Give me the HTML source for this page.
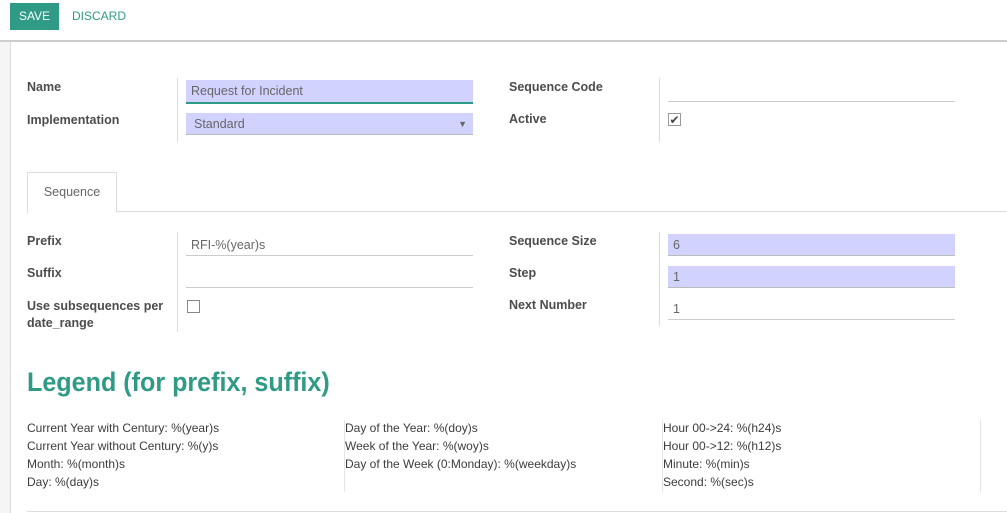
<!DOCTYPE html><html><head><style>
body{margin:0;width:1007px;height:513px;overflow:hidden;background:#fff;font-family:"Liberation Sans",sans-serif;font-size:12.5px;color:#4c4c4c;position:relative}
.a{position:absolute;white-space:nowrap}
.lb{font-weight:bold;color:#4c4c4c}
.inp{position:absolute;background:#d2d2ff;border-bottom:1px solid #bbb;height:22px;line-height:22px;padding-left:5px;box-sizing:border-box;color:#666}
.ul{position:absolute;border-bottom:1px solid #ccc;height:22px;line-height:22px;padding-left:5px;box-sizing:border-box;color:#666}
.vl{position:absolute;width:1px;background:#ddd}
.lg{font-size:12px;line-height:18px;color:#3c3c3c}
</style></head><body>
<div class="a" style="left:10px;top:3px;width:49px;height:27px;background:#2f9a86;color:#fff;text-align:center;line-height:27px;font-size:12px">SAVE</div>
<div class="a" style="left:72px;top:3px;line-height:27px;color:#2f9a86;font-size:12px">DISCARD</div>
<div class="a" style="left:0;top:40px;width:1007px;height:2px;background:#ccc"></div>
<div class="a" style="left:0;top:42px;width:10px;height:471px;background:#f5f5f5;border-right:1px solid #ddd"></div>

<div class="a lb" style="left:27px;top:80px">Name</div>
<div class="a lb" style="left:27px;top:113px">Implementation</div>
<div class="vl" style="left:177px;top:78px;height:64px"></div>
<div class="inp" style="left:186px;top:80px;width:287px;border-bottom:2px solid #2f9a86;height:24px">Request for Incident</div>
<div class="inp" style="left:186px;top:113px;width:287px;padding-left:8px">Standard<span style="position:absolute;right:6px;font-size:9px">▼</span></div>
<div class="a lb" style="left:509px;top:80px">Sequence Code</div>
<div class="a lb" style="left:509px;top:112px">Active</div>
<div class="vl" style="left:659px;top:78px;height:64px"></div>
<div class="ul" style="left:668px;top:80px;width:287px"></div>
<div class="a" style="left:668px;top:113px;width:13px;height:13px;border:1px solid #999;box-sizing:border-box;font-size:12px;line-height:12px;text-align:center;color:#444">✔</div>

<div class="a" style="left:27px;top:172px;width:88px;height:40px;border:1px solid #ddd;border-bottom:none;background:#fff;text-align:center;line-height:38px;color:#666;z-index:2">Sequence</div>
<div class="a" style="left:27px;top:211px;width:980px;height:1px;background:#ddd"></div>

<div class="a lb" style="left:27px;top:234px">Prefix</div>
<div class="a lb" style="left:27px;top:266px">Suffix</div>
<div class="a lb" style="left:27px;top:298px;line-height:17px">Use subsequences per<br>date_range</div>
<div class="vl" style="left:177px;top:232px;height:100px"></div>
<div class="ul" style="left:186px;top:234px;width:287px">RFI-%(year)s</div>
<div class="ul" style="left:186px;top:266px;width:287px"></div>
<div class="a" style="left:187px;top:300px;width:13px;height:13px;border:1px solid #888;box-sizing:border-box"></div>
<div class="a lb" style="left:509px;top:234px">Sequence Size</div>
<div class="a lb" style="left:509px;top:266px">Step</div>
<div class="a lb" style="left:509px;top:298px">Next Number</div>
<div class="vl" style="left:659px;top:232px;height:94px"></div>
<div class="inp" style="left:668px;top:234px;width:287px">6</div>
<div class="inp" style="left:668px;top:266px;width:287px">1</div>
<div class="ul" style="left:668px;top:298px;width:287px">1</div>

<div class="a" style="left:27px;top:367px;font-size:27px;font-weight:bold;color:#2f9a86;transform:scaleX(0.93);transform-origin:left">Legend (for prefix, suffix)</div>
<div class="a lg" style="left:27px;top:419px">Current Year with Century: %(year)s<br>Current Year without Century: %(y)s<br>Month: %(month)s<br>Day: %(day)s</div>
<div class="vl" style="left:344px;top:420px;height:72px;background:#e5e5e5"></div>
<div class="a lg" style="left:345px;top:419px">Day of the Year: %(doy)s<br>Week of the Year: %(woy)s<br>Day of the Week (0:Monday): %(weekday)s</div>
<div class="vl" style="left:662px;top:420px;height:72px;background:#e5e5e5"></div>
<div class="a lg" style="left:663px;top:419px">Hour 00-&gt;24: %(h24)s<br>Hour 00-&gt;12: %(h12)s<br>Minute: %(min)s<br>Second: %(sec)s</div>
<div class="vl" style="left:980px;top:420px;height:72px;background:#e5e5e5"></div>
<div class="a" style="left:27px;top:511px;width:980px;height:1px;background:#ddd"></div>
</body></html>
